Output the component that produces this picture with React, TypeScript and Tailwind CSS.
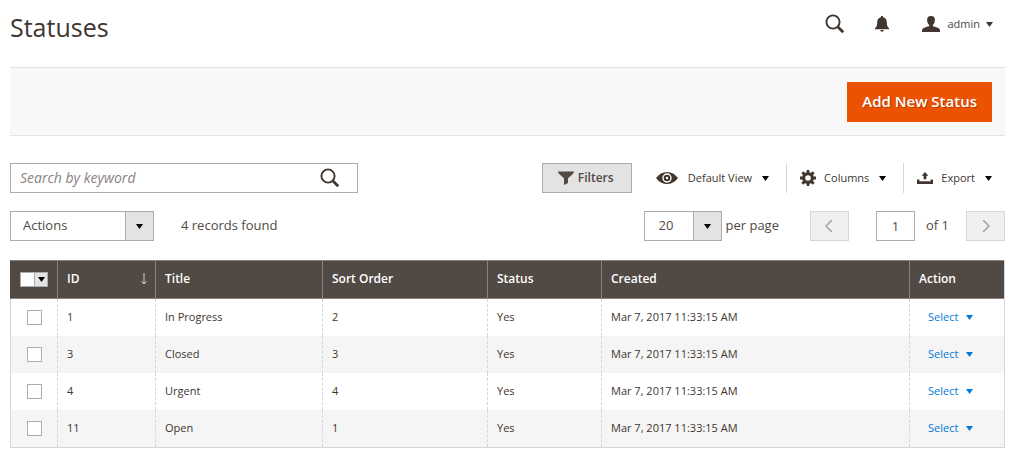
import React, { useState } from 'react';

interface StatusRow {
  id: number;
  title: string;
  sortOrder: number;
  status: string;
  created: string;
}

const rows: StatusRow[] = [
  { id: 1, title: 'In Progress', sortOrder: 2, status: 'Yes', created: 'Mar 7, 2017 11:33:15 AM' },
  { id: 3, title: 'Closed', sortOrder: 3, status: 'Yes', created: 'Mar 7, 2017 11:33:15 AM' },
  { id: 4, title: 'Urgent', sortOrder: 4, status: 'Yes', created: 'Mar 7, 2017 11:33:15 AM' },
  { id: 11, title: 'Open', sortOrder: 1, status: 'Yes', created: 'Mar 7, 2017 11:33:15 AM' },
];

const Caret: React.FC<{ className?: string }> = ({ className = '' }) => (
  <svg viewBox="0 0 8 5" className={`w-[7px] h-[5px] shrink-0 fill-current ${className}`} preserveAspectRatio="none" aria-hidden="true">
    <path d="M0 0h8L4 5z" />
  </svg>
);

const SearchIcon = () => (
  <svg viewBox="0 0 20 20" className="size-5" fill="none" stroke="currentColor" aria-hidden="true">
    <circle cx="8" cy="8" r="6.6" strokeWidth="1.9" />
    <path d="M13 13l5.2 5.2" strokeWidth="2.8" />
  </svg>
);

const BellIcon = () => (
  <svg viewBox="0 0 14 16" className="w-[14px] h-4 fill-current" aria-hidden="true">
    <path d="M7 0c.8 0 1.2.5 1.2 1.2C10.600 1.800 11.800 3.700 11.800 6c0 3.500.7 5 2.200 6.300v.9H0v-.9C1.500 11 2.200 9.500 2.200 6c0-2.300 1.200-4.200 3.600-4.800C5.800.5 6.200 0 7 0zM5.300 14h3.400c0 1-.7 1.700-1.700 1.700S5.300 15 5.300 14z" />
  </svg>
);

const UserIcon = () => (
  <svg viewBox="0 0 18 16" className="w-[18px] h-4 fill-current" aria-hidden="true">
    <path d="M9 0c2.700 0 3.900 1.500 3.900 4 0 2.200-.9 4-2 5v1.300c2.700.8 6.100 1.500 6.900 3.200.2.600.2 1.500.2 2.500H0c0-1 0-1.900.2-2.500.8-1.700 4.200-2.400 6.900-3.200V9c-1.100-1-2-2.800-2-5 0-2.500 1.200-4 3.900-4z" />
  </svg>
);

const FunnelIcon = () => (
  <svg viewBox="0 0 16 14" className="w-4 h-[14px] fill-current" aria-hidden="true">
    <path d="M0 .5h16c0 1.500-1.500 2.800-3.200 4.200L10 7.200V12l-4 2V7.200L3.200 4.700C1.500 3.300 0 2 0 .5z" />
  </svg>
);

const EyeIcon = () => (
  <svg viewBox="0 0 22 12" className="w-[22px] h-3" aria-hidden="true">
    <path fill="currentColor" d="M0 6c3-4 6.800-6 11-6s8 2 11 6c-3 4-6.800 6-11 6S3 10 0 6z" />
    <circle cx="11" cy="6" r="4.700" fill="#fff" />
    <circle cx="11" cy="6" r="3.300" fill="currentColor" />
    <circle cx="11" cy="6" r="1.200" fill="#fff" />
  </svg>
);

const GearIcon = () => (
  <svg viewBox="0 0 16 16" className="size-4" fill="none" stroke="currentColor" aria-hidden="true">
    <circle cx="8" cy="8" r="4.400" strokeWidth="3.200" />
    <path
      strokeWidth="2.800"
      d="M8 0v3M8 13v3M0 8h3M13 8h3M2.300 2.300l2.200 2.200M11.500 11.500l2.200 2.200M2.300 13.700l2.200-2.200M11.500 4.500l2.200-2.200"
    />
  </svg>
);

const ExportIcon = () => (
  <svg viewBox="0 0 16 12" className="w-4 h-3 fill-current" aria-hidden="true">
    <path d="M8 0l3.400 3.800H9.400V7.200H6.600V3.800H4.600z" />
    <path d="M0 7.500h2.400v1.700h11.200V7.500H16V12H0z" />
  </svg>
);

const ChevronIcon: React.FC<{ d: string }> = ({ d }) => (
  <svg viewBox="0 0 8 12" className="w-2 h-3" fill="none" stroke="currentColor" strokeWidth="1.500" aria-hidden="true">
    <path d={d} />
  </svg>
);

interface SelectBoxProps {
  label: string;
  options: string[];
  className: string;
}

const SelectBox: React.FC<SelectBoxProps> = ({ label, options, className }) => (
  <div className="relative h-[30px] border border-[#adadad] bg-white">
    <select aria-label={label} className={`h-full appearance-none bg-transparent pr-7 outline-none ${className}`}>
      {options.map((option) => (
        <option key={option}>{option}</option>
      ))}
    </select>
    <span className="pointer-events-none absolute inset-y-0 right-0 flex w-7 items-center justify-center border-l border-[#adadad] bg-[#e3e3e3] text-black">
      <Caret />
    </span>
  </div>
);

const App: React.FC = () => {
  const [selected, setSelected] = useState<number[]>([]);
  const [keyword, setKeyword] = useState('');
  const [page, setPage] = useState('1');

  const toggleRow = (id: number) => {
    setSelected((prev) => (prev.includes(id) ? prev.filter((item) => item !== id) : [...prev, id]));
  };

  const toggleAll = () => {
    setSelected(selected.length === rows.length ? [] : rows.map((row) => row.id));
  };

  return (
    <div className="bg-white pl-[10px] pr-[19px] pb-3 font-['Open_Sans','Noto_Sans',sans-serif] text-[13px] text-[#41362f]">
      <header className="flex h-[67px] items-start justify-between">
        <h1 className="pt-[11px] text-[25px] leading-8">Statuses</h1>
        <div className="flex h-12 items-center pr-3">
          <button type="button" aria-label="Search" className="mr-[30px]">
            <SearchIcon />
          </button>
          <button type="button" aria-label="Notifications" className="mr-[33px]">
            <BellIcon />
          </button>
          <button type="button" className="flex items-center text-[11px]">
            <UserIcon />
            <span className="ml-[7px] mr-[6px] text-[#514943]">admin</span>
            <Caret />
          </button>
        </div>
      </header>

      <div className="flex h-[69px] items-center justify-end border-y border-[#e3e3e3] bg-[#f8f8f8] px-[13px]">
        <button
          type="button"
          className="h-10 bg-[#eb5202] px-[15px] text-[15px] font-semibold text-white [text-shadow:1px_1px_0_rgba(0,0,0,0.25)]"
        >
          Add New Status
        </button>
      </div>

      {/* Search and grid controls */}
      <div className="mt-[27px] flex h-[30px] items-stretch justify-between">
        <div className="flex w-[348px] items-center border border-[#adadad] pr-[17px]">
          <input
            type="text"
            aria-label="Search by keyword"
            placeholder="Search by keyword"
            value={keyword}
            onChange={(e) => setKeyword(e.target.value)}
            className="min-w-0 flex-1 pl-[9px] text-sm outline-none placeholder:italic placeholder:text-[#8a837f]"
          />
          <button type="button" aria-label="Submit search">
            <SearchIcon />
          </button>
        </div>
        <div className="flex items-center text-[11px]">
          <button
            type="button"
            className="mr-6 flex h-full w-[90px] items-center gap-1 border border-[#adadad] bg-[#e3e3e3] pl-[15px] text-xs font-semibold text-[#514943]"
          >
            <FunnelIcon />
            Filters
          </button>
          <button type="button" className="flex items-center pr-[17px]">
            <EyeIcon />
            <span className="ml-[10px] mr-[10px]">Default View</span>
            <Caret className="text-black" />
          </button>
          <button type="button" className="flex h-full items-center border-l border-[#d6d6d6] pl-[13px] pr-[17px]">
            <GearIcon />
            <span className="ml-2 mr-[10px]">Columns</span>
            <Caret className="text-black" />
          </button>
          <button type="button" className="flex h-full items-center border-l border-[#d6d6d6] pl-[13px] pr-[13px]">
            <ExportIcon />
            <span className="ml-2 mr-[10px]">Export</span>
            <Caret className="text-black" />
          </button>
        </div>
      </div>

      {/* Mass actions and pager */}
      <div className="mt-[18px] flex items-center justify-between text-[#514943]">
        <div className="flex items-center">
          <SelectBox label="Actions" options={['Actions', 'Delete', 'Edit']} className="w-[142px] pl-3" />
          <span className="ml-[27px]">4 records found</span>
        </div>
        <div className="flex items-center">
          <SelectBox label="Records per page" options={['20', '30', '50', '100']} className="w-[76px] pl-[14px]" />
          <span className="ml-1 mr-[31px]">per page</span>
          <button
            type="button"
            disabled
            aria-label="Previous page"
            className="flex h-[30px] w-[39px] items-center justify-center border border-[#d6d6d6] bg-[#f0f0f0] text-[#a5a09d]"
          >
            <ChevronIcon d="M7 0L1 6l6 6" />
          </button>
          <input
            type="text"
            aria-label="Current page"
            value={page}
            onChange={(e) => setPage(e.target.value)}
            className="ml-[27px] mr-[11px] h-[30px] w-[39px] border border-[#adadad] text-center outline-none"
          />
          <span>of 1</span>
          <button
            type="button"
            disabled
            aria-label="Next page"
            className="ml-[17px] flex h-[30px] w-[39px] items-center justify-center border border-[#d6d6d6] bg-[#f0f0f0] text-[#a5a09d]"
          >
            <ChevronIcon d="M1 0l6 6-6 6" />
          </button>
        </div>
      </div>

      <table className="mt-[19px] w-full table-fixed border-separate border-spacing-0 border-r border-b border-[#d6d6d6] text-left text-[11px]">
        <thead>
          <tr className="h-[39px] bg-[#514943] text-xs text-white *:border-y *:border-r *:border-[#8a837f] *:pb-[2px] *:font-semibold *:last:border-r-0">
            <th className="w-12">
              <div className="ml-[10px] mt-[2px] flex h-[15px] w-7 border border-[#adadad]">
                <input
                  type="checkbox"
                  aria-label="Select all"
                  checked={selected.length === rows.length}
                  onChange={toggleAll}
                  className="block w-[13px] appearance-none bg-white checked:bg-[#514943]"
                />
                <button
                  type="button"
                  aria-label="Selection options"
                  className="flex flex-1 items-center justify-center border-l border-[#adadad] bg-[#e3e3e3] text-black"
                >
                  <Caret />
                </button>
              </div>
            </th>
            <th className="w-[98px] pl-[9px]">
              <div className="flex items-center justify-between pr-2">
                ID
                <svg viewBox="0 0 6 12" className="w-[6px] h-3" fill="none" stroke="#d9cfc4" aria-hidden="true">
                  <path d="M3 0v11M.5 8.500L3 11l2.500-2.500" />
                </svg>
              </div>
            </th>
            <th className="w-[167px] pl-[9px]">Title</th>
            <th className="w-[165px] pl-[9px]">Sort Order</th>
            <th className="w-[114px] pl-[9px]">Status</th>
            <th className="pl-[9px]">Created</th>
            <th className="w-[94px] pl-[9px]">Action</th>
          </tr>
        </thead>
        <tbody>
          {rows.map((row) => (
            <tr
              key={row.id}
              className="h-[37px] even:bg-[#f5f5f5] *:border-r *:border-dashed *:border-[#d6d6d6] *:pb-px *:pl-[9px] *:first:border-l *:first:[border-left-style:solid] *:last:border-r-0"
            >
              <td>
                <input
                  type="checkbox"
                  aria-label={`Select ${row.title}`}
                  checked={selected.includes(row.id)}
                  onChange={() => toggleRow(row.id)}
                  className="ml-[7px] block size-[15px] appearance-none border border-[#adadad] bg-white checked:bg-[#514943]"
                />
              </td>
              <td>{row.id}</td>
              <td>{row.title}</td>
              <td>{row.sortOrder}</td>
              <td>{row.status}</td>
              <td>{row.created}</td>
              <td>
                <button type="button" className="ml-[9px] flex items-center gap-2 text-[#007bdb]">
                  Select
                  <Caret />
                </button>
              </td>
            </tr>
          ))}
        </tbody>
      </table>
    </div>
  );
};

export default App;
